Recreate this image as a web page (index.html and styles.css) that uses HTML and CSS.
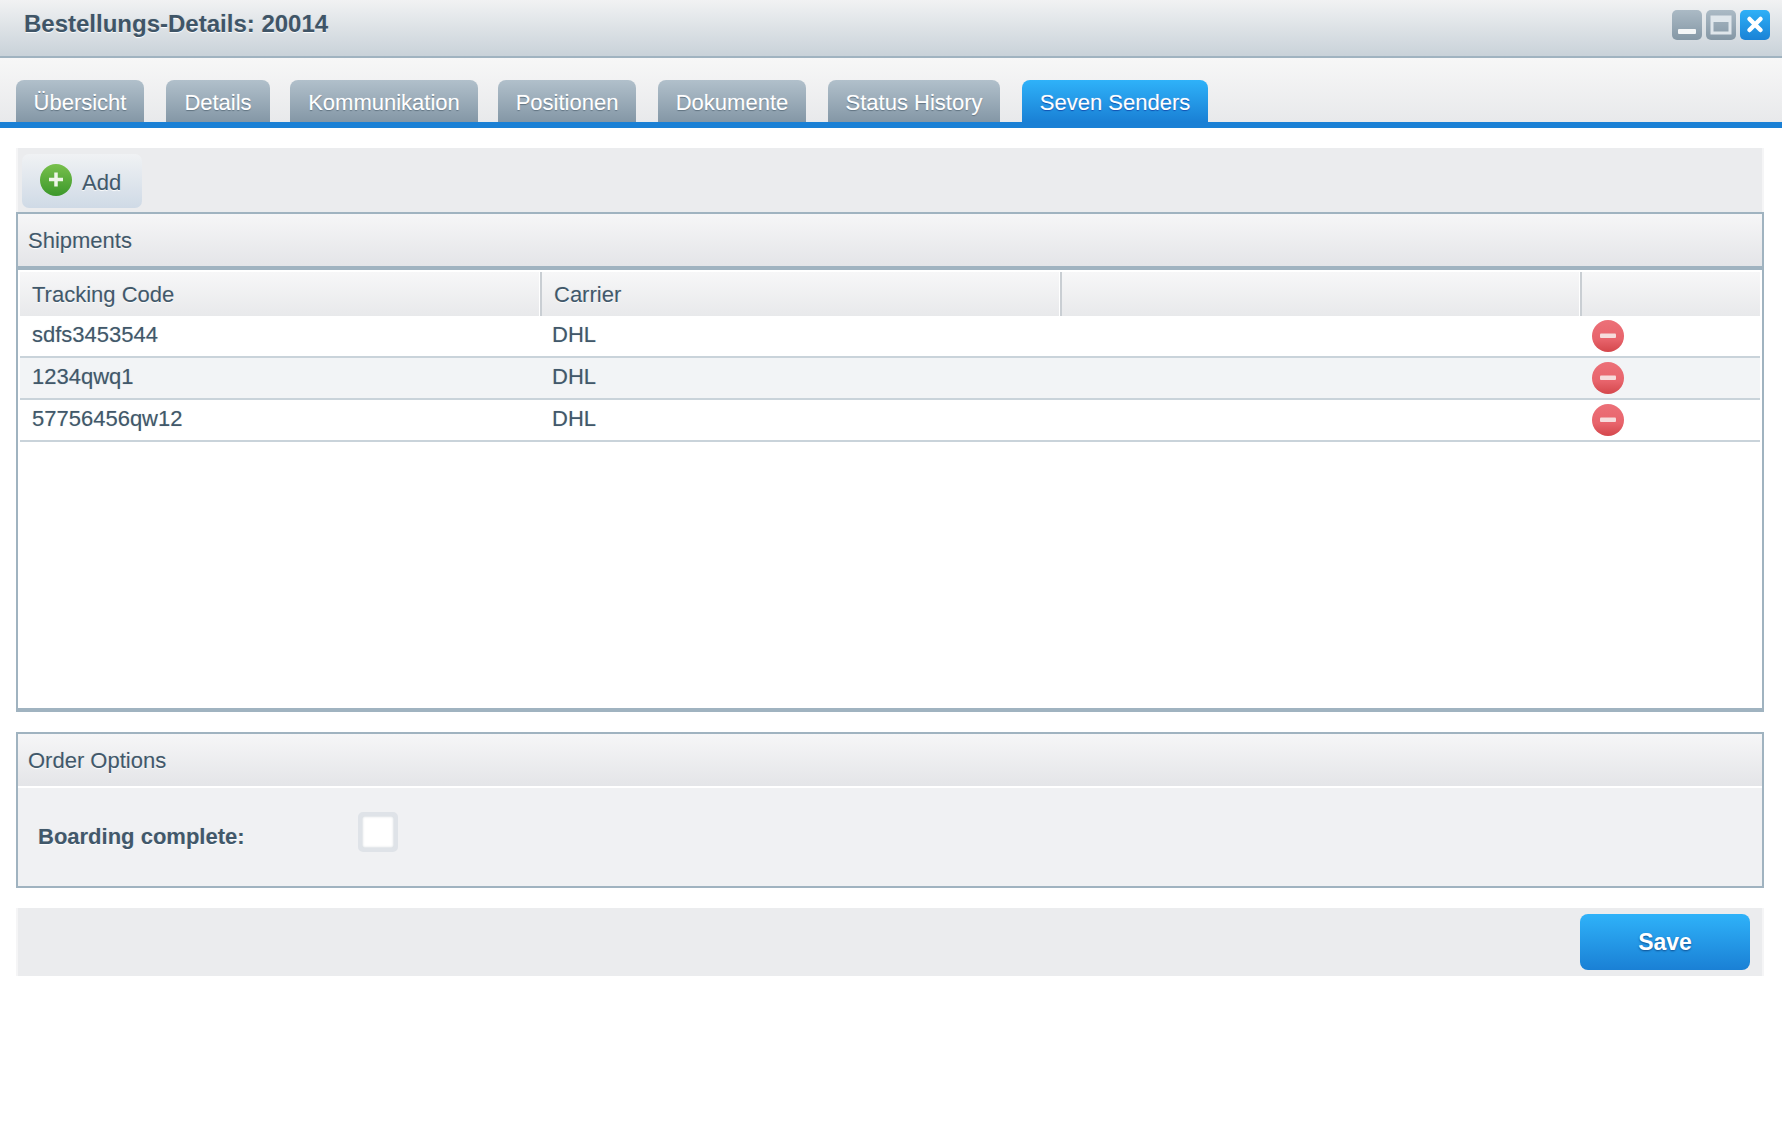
FILE: index.html
```html
<!DOCTYPE html>
<html lang="de">
<head>
<meta charset="utf-8">
<title>Bestellungs-Details: 20014</title>
<link rel="stylesheet" href="styles.css">
</head>
<body>
<header class="titlebar">
  <h1 class="title">Bestellungs-Details: 20014</h1>
  <div class="win-controls">
    <span class="win-btn"><svg viewBox="0 0 30 30" width="30" height="30"><rect x="6" y="19" width="18" height="5" rx="1" fill="#f4f6f7"/></svg></span>
    <span class="win-btn"><svg viewBox="0 0 30 30" width="30" height="30"><rect x="6" y="7" width="18" height="16" fill="none" stroke="#dfe6eb" stroke-width="3"/><rect x="6" y="6" width="18" height="6" fill="#dfe6eb"/></svg></span>
    <span class="win-btn win-btn-close"><svg viewBox="0 0 30 30" width="30" height="30"><path d="M9.500 9l11 11M20.500 9l-11 11" stroke="#fff" stroke-width="4.500" stroke-linecap="round"/></svg></span>
  </div>
</header>

<nav class="tabbar">
  <a class="tab">Übersicht</a>
  <a class="tab tab-details">Details</a>
  <a class="tab tab-komm">Kommunikation</a>
  <a class="tab tab-pos">Positionen</a>
  <a class="tab tab-dok">Dokumente</a>
  <a class="tab tab-status">Status History</a>
  <a class="tab tab-active">Seven Senders</a>
</nav>

<main class="content">
  <div class="toolbar">
    <button class="add-btn" type="button">
      <svg class="add-icon" viewBox="0 0 32 32" width="32" height="32">
        <defs><linearGradient id="gGreen" x1="0" y1="0" x2="0" y2="1"><stop offset="0" stop-color="#78c04c"/><stop offset="1" stop-color="#3c982b"/></linearGradient></defs>
        <circle cx="16" cy="16" r="16" fill="url(#gGreen)"/>
        <path d="M16 8.500v14M9 15.500h14" stroke="#eef6e8" stroke-width="3.500"/>
      </svg>
      <span>Add</span>
    </button>
  </div>

  <section class="panel panel-shipments">
    <div class="panel-head panel-head-line">Shipments</div>
    <div class="grid">
      <div class="grid-row grid-header">
        <div class="cell head-cell head-first">Tracking Code</div>
        <div class="cell head-cell">Carrier</div>
        <div class="cell head-cell"></div>
        <div class="cell head-cell"></div>
      </div>
      <div class="grid-row data-row">
        <div class="cell first-cell">sdfs3453544</div>
        <div class="cell">DHL</div>
        <div class="cell"></div>
        <div class="cell icon-cell"><svg viewBox="0 0 32 32" width="32" height="32"><use href="#del"/></svg></div>
      </div>
      <div class="grid-row data-row row-alt">
        <div class="cell first-cell">1234qwq1</div>
        <div class="cell">DHL</div>
        <div class="cell"></div>
        <div class="cell icon-cell"><svg viewBox="0 0 32 32" width="32" height="32"><use href="#del"/></svg></div>
      </div>
      <div class="grid-row data-row">
        <div class="cell first-cell">57756456qw12</div>
        <div class="cell">DHL</div>
        <div class="cell"></div>
        <div class="cell icon-cell"><svg viewBox="0 0 32 32" width="32" height="32"><use href="#del"/></svg></div>
      </div>
    </div>
  </section>

  <section class="panel panel-options">
    <div class="panel-head">Order Options</div>
    <div class="options-body">
      <label class="opt-label">Boarding complete:</label>
      <span class="checkbox"></span>
    </div>
  </section>

  <div class="footer-bar">
    <button class="save-btn" type="button">Save</button>
  </div>
</main>

<svg class="defs" width="0" height="0">
  <defs>
    <linearGradient id="gRed" x1="0" y1="0" x2="0" y2="1"><stop offset="0" stop-color="#ec7078"/><stop offset="0.6" stop-color="#e8646c"/><stop offset="1" stop-color="#d4474c"/></linearGradient>
    <g id="del"><circle cx="16" cy="16" r="16" fill="url(#gRed)"/><rect x="8" y="13.500" width="16" height="4.500" rx="1" fill="#f6dcdc"/></g>
  </defs>
</svg>
</body>
</html>
```
FILE: styles.css
```css
* { box-sizing: border-box; }
html, body { margin: 0; padding: 0; background: #fff; }
body {
  font-family: "Liberation Sans", Arial, sans-serif;
  font-size: 22px;
  color: #41586a;
  height: 1144px;
  overflow: hidden;
}

.titlebar {
  height: 58px;
  border-bottom: 2px solid #a0b3c0;
  background: linear-gradient(#f1f2f3, #c9d2d9);
  display: flex;
  justify-content: space-between;
  padding: 10px 12px 0 24px;
}
.title {
  margin: 0;
  font-size: 24px;
  font-weight: bold;
  line-height: 28px;
  text-shadow: 0 1px 1px #fff, 0 0 1px rgba(63, 85, 103, 0.4);
  color: #3f5567;
}
.win-controls { display: flex; gap: 4px; }
.win-btn {
  width: 30px;
  height: 30px;
  border-radius: 5px;
  background: linear-gradient(#abbac5, #8497a5);
  display: block;
}
.win-btn svg, .add-icon { display: block; }
.win-btn-close { background: linear-gradient(#2eb0f7, #1a82d6); }

.tabbar {
  height: 70px;
  padding: 22px 0 0 16px;
  border-bottom: 6px solid #1a80d5;
  background: linear-gradient(#f7f7f7, #e8e9eb);
  display: flex;
  gap: 22px;
}
.tab {
  width: 128px;
  height: 42px;
  border-radius: 8px 8px 0 0;
  background: linear-gradient(#b1c0cb, #8497a6);
  color: #fff;
  text-align: center;
  line-height: 45px;
  text-shadow: 0 1px 1px #5f7280, 0 0 1px rgba(255, 255, 255, 0.6);
}
.tab-details { width: 104px; margin-right: -2px; }
.tab-komm { width: 188px; margin-right: -2px; }
.tab-pos { width: 138px; }
.tab-dok { width: 148px; }
.tab-status { width: 172px; }
.tab-active {
  width: 186px;
  background: linear-gradient(#2fb2f9, #1a80d5);
  text-shadow: 0 1px 1px #0f4fb0, 0 0 1px rgba(255, 255, 255, 0.6);
}

.content { padding: 20px 18px 0 16px; }

.toolbar {
  height: 64px;
  padding: 6px 0 0 4px;
  background: #ebecee;
  border-left: 2px solid #f5f5f6;
  border-right: 2px solid #f5f5f6;
}
.add-btn {
  width: 120px;
  height: 54px;
  border: 0;
  border-radius: 7px;
  padding: 0 0 0 18px;
  display: flex;
  align-items: flex-start;
  gap: 10px;
  background: linear-gradient(#f0f2f4, #cfdae6);
  font: inherit;
  color: #41586a;
  text-shadow: 0 1px 1px #fff, 0 0 1px rgba(65, 88, 106, 0.35);
}
.add-icon { margin-top: 10px; }
.add-btn span { line-height: 28px; margin-top: 15px; }

.panel { border: 2px solid #a0b3c0; }
.panel-shipments {
  height: 500px;
  border-bottom-width: 4px;
  background: #fff;
}
.panel-head {
  height: 52px;
  padding-left: 10px;
  line-height: 54px;
  background: linear-gradient(#f6f6f7, #e4e5e8);
  text-shadow: 0 1px 1px #fff, 0 0 1px rgba(65, 88, 106, 0.35);
}
.panel-head-line {
  height: 56px;
  border-bottom: 4px solid #a0b3c0;
}

.grid { padding: 2px 2px 0 2px; }
.grid-row {
  display: grid;
  grid-template-columns: 520px 520px 520px 180px;
}
.grid-header { height: 44px; }
.head-cell {
  height: 44px;
  line-height: 46px;
  padding-left: 12px;
  background: linear-gradient(#f7f7f8, #e8e9eb);
  border-left: 2px solid #c9ced3;
  box-shadow: -1px 0 0 #fff;
  text-shadow: 0 1px 1px #fff, 0 0 1px rgba(65, 88, 106, 0.35);
}
.head-first {
  border-left: 0;
  box-shadow: none;
}
.data-row {
  height: 42px;
  border-bottom: 2px solid #c9d3da;
  line-height: 38px;
  text-shadow: 0 0 1px rgba(65, 88, 106, 0.35);
}
.row-alt { background: #f2f4f6; }
.data-row .cell { padding-left: 12px; }
.data-row .icon-cell { padding: 4px 0 0 12px; }
.icon-cell svg { display: block; }

.panel-options {
  margin-top: 20px;
  height: 156px;
  background: #f0f1f3;
}
.panel-options .panel-head { box-shadow: 0 2px 0 #fff; position: relative; }
.options-body {
  display: flex;
  padding: 26px 0 0 20px;
}
.opt-label {
  width: 320px;
  font-weight: bold;
  line-height: 28px;
  margin-top: 11px;
  text-shadow: 0 1px 1px #fff, 0 0 1px rgba(65, 88, 106, 0.35);
}
.checkbox {
  width: 40px;
  height: 40px;
  border: 4px solid #dfe3e8;
  border-radius: 5px;
  background: #fff;
  box-shadow: inset 0 0 3px #b9c2ca;
}

.footer-bar {
  margin-top: 20px;
  height: 68px;
  padding: 6px 12px 0 0;
  background: #ebecee;
  border-left: 2px solid #f5f5f6;
  border-right: 2px solid #f5f5f6;
  display: flex;
  justify-content: flex-end;
}
.save-btn {
  width: 170px;
  height: 56px;
  border: 0;
  border-radius: 8px;
  padding-top: 2px;
  background: linear-gradient(#2fb2f9, #1a80d5);
  color: #fff;
  font: bold 23px "Liberation Sans", Arial, sans-serif;
  text-shadow: 0 1px 2px #0f4f90;
}
.defs { position: absolute; }
```
